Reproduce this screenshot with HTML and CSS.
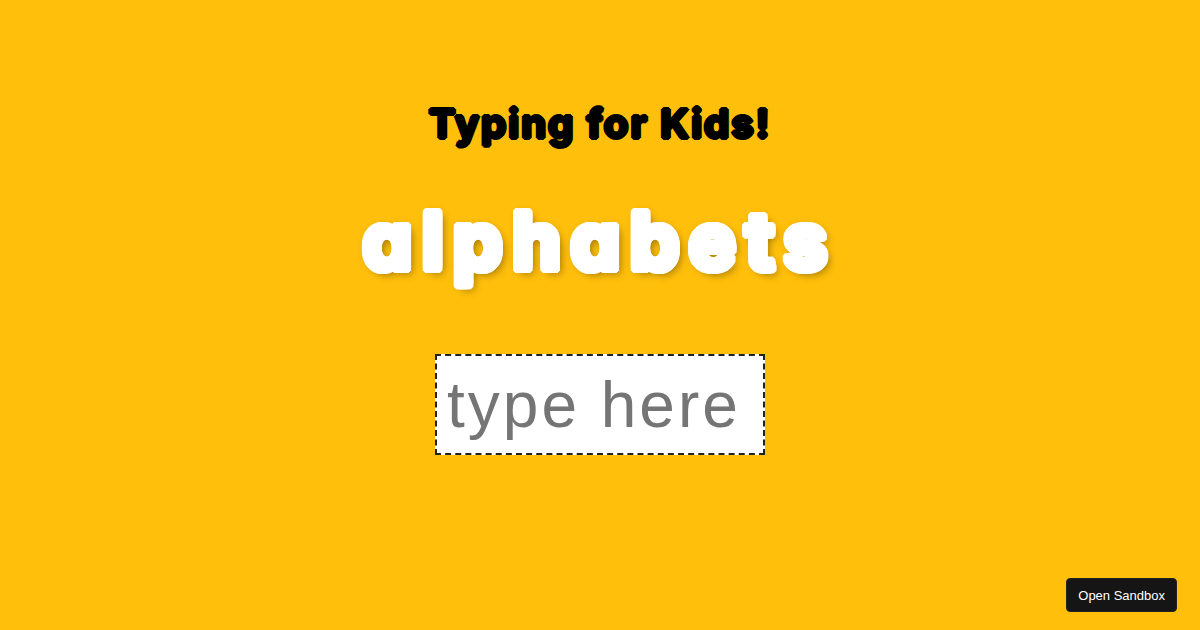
FILE: index.html
```html
<!DOCTYPE html>
<html lang="en">
<head>
  <meta charset="UTF-8">
  <meta name="viewport" content="width=device-width, initial-scale=1.0">
  <title>Typing for Kids!</title>
  <link rel="stylesheet" href="styles.css">
</head>
<body>
  <main class="app">
    <h1>Typing for Kids!</h1>
    <div class="word">alphabets</div>
    <input type="text" class="type-box" placeholder="type here" aria-label="Type the word">
  </main>

  <button type="button" class="open-sandbox">Open Sandbox</button>
</body>
</html>
```
FILE: styles.css
```css
* {
  box-sizing: border-box;
}

body {
  margin: 0;
  min-height: 100vh;
  background: #ffbf0b;
  font-family: Inter, "Liberation Sans", sans-serif;
  font-feature-settings: "cv11";
}

.app {
  display: flex;
  flex-direction: column;
  align-items: center;
  padding: 100px 16px 0;
}

/* The ring of hard shadows thickens the letters and rounds their corners */
h1 {
  margin: 0;
  font-size: 40px;
  line-height: 48px;
  font-weight: 700;
  letter-spacing: 2px;
  color: #000;
  text-shadow:
    2px 0 #000, -2px 0 #000, 0 2px #000, 0 -2px #000,
    1px 1px #000, -1px 1px #000, 1px -1px #000, -1px -1px #000;
}

.word {
  margin: 40px 0 60px;
  font-size: 78px;
  line-height: 106px;
  font-weight: 700;
  letter-spacing: 10px;
  color: #fff;
  text-shadow:
    4px 0 #fff, -4px 0 #fff, 0 4px #fff, 0 -4px #fff,
    3px 3px #fff, -3px 3px #fff, 3px -3px #fff, -3px -3px #fff,
    4px 2px #fff, -4px 2px #fff, 4px -2px #fff, -4px -2px #fff,
    2px 4px #fff, -2px 4px #fff, 2px -4px #fff, -2px -4px #fff,
    5px 5px 8px rgba(0, 0, 0, 0.3), 1px 1px 10px rgba(0, 0, 0, 0.3);
}

.type-box {
  width: 330px;
  max-width: 100%;
  height: 101px;
  padding: 0 10px;
  border: 2px dashed #222;
  border-radius: 0;
  background: #fff;
  font-family: Helvetica, "Liberation Sans", Arial, sans-serif;
  font-size: 64px;
  letter-spacing: 3px;
  color: #222;
  outline: none;
}

.type-box::placeholder {
  color: #757575;
}

/* Floating button */
.open-sandbox {
  position: fixed;
  right: 23px;
  bottom: 18px;
  height: 34px;
  padding: 0 11px;
  border: 1px solid #222;
  border-radius: 4px;
  background: #151515;
  color: #fff;
  font-family: Helvetica, "Liberation Sans", Arial, sans-serif;
  font-size: 13px;
  cursor: pointer;
}
```
